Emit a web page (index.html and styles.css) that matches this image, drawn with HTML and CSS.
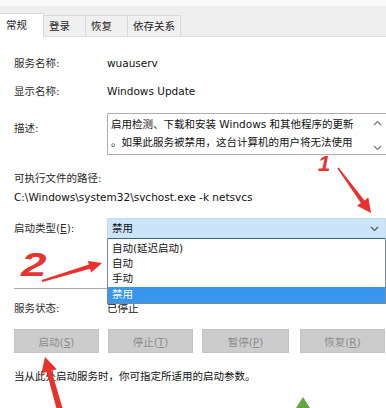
FILE: index.html
```html
<!DOCTYPE html>
<html>

<head>
    <meta charset="UTF-8">
    <title>Windows Update 的属性</title>
    <link rel="stylesheet" href="styles.css">
</head>

<body>
    <div class="tabbar">
        <div class="tab active">常规</div>
        <div class="tab">登录</div>
        <div class="tab">恢复</div>
        <div class="tab wide">依存关系</div>
    </div>

    <div class="content">
        <div class="row first">
            <span class="label">服务名称:</span>
            <span class="value">wuauserv</span>
        </div>
        <div class="row">
            <span class="label">显示名称:</span>
            <span class="value">Windows Update</span>
        </div>
        <div class="row desc-row">
            <span class="label desc-label">描述:</span>
            <div class="desc-box">
                启用检测、下载和安装 Windows 和其他程序的更新<br>
                。如果此服务被禁用，这台计算机的用户将无法使用
                <svg class="scroll-up" width="9" height="6" viewBox="0 0 9 6"><polyline points="1,5 4.5,1.5 8,5" fill="none" stroke="#777" stroke-width="1.2"/></svg>
                <svg class="scroll-down" width="9" height="6" viewBox="0 0 9 6"><polyline points="1,1 4.5,4.5 8,1" fill="none" stroke="#777" stroke-width="1.2"/></svg>
            </div>
        </div>

        <div class="path-label">可执行文件的路径:</div>
        <div class="path">C:\Windows\system32\svchost.exe -k netsvcs</div>

        <div class="row combo-row">
            <span class="label">启动类型(<u>E</u>):</span>
            <div class="combo">
                <span>禁用</span>
                <svg class="chevron" width="9" height="6" viewBox="0 0 9 6"><polyline points="1,1 4.5,4.5 8,1" fill="none" stroke="#555" stroke-width="1.2"/></svg>
                <ul class="dropdown">
                    <li>自动(延迟启动)</li>
                    <li>自动</li>
                    <li>手动</li>
                    <li class="selected">禁用</li>
                </ul>
            </div>
        </div>

        <div class="divider"></div>

        <div class="row status-row">
            <span class="label">服务状态:</span>
            <span class="value">已停止</span>
        </div>

        <div class="buttons">
            <button>启动(<u>S</u>)</button>
            <button>停止(<u>T</u>)</button>
            <button class="pause">暂停(<u>P</u>)</button>
            <button class="resume">恢复(<u>R</u>)</button>
        </div>

        <div class="hint">当从此处启动服务时，你可指定所适用的启动参数。</div>
    </div>

    <!-- 红色标注 -->
    <span class="mark mark-1">1</span>
    <span class="mark mark-2">2</span>
    <svg class="annotations" width="386" height="408" viewBox="0 0 386 408">
        <polygon points="337.4,168.4 338.6,167.6 364.5,200.4 368.3,197.6 371,213 357.1,205.8 360.9,203.0" fill="#e8302c"/>
        <polygon points="41.7,280 88.9,264.6 87.8,261.0 102,263 91.2,272.5 90.1,268.8 42.3,282" fill="#e8302c"/>
        <polygon points="57.1,410.8 46.7,372.1 41.4,373.6 45,357 56.8,369.2 51.5,370.7 62.9,409.2" fill="#e8302c"/>
        <polygon points="303,397 296,408 310,408" fill="#5fa83a"/>
    </svg>
</body>

</html>
```

FILE: styles.css
```css
body {
    margin: 0;
    width: 386px;
    height: 408px;
    overflow: hidden;
    position: relative;
    background: #fff;
    color: #1e1e1e;
    font-family: "DejaVu Sans", "Noto Sans CJK SC", sans-serif;
    font-size: 10.5px;
}

.tabbar {
    height: 37px;
    display: flex;
    align-items: flex-end;
    background: linear-gradient(#fafafa 0, #fafafa 6px, #eeeeee 6px);
    border-bottom: 1px solid #dcdcdc;
    box-sizing: border-box;
}

.tab {
    width: 42px;
    height: 21px;
    box-sizing: border-box;
    padding-left: 5px;
    line-height: 20px;
    white-space: nowrap;
    background: #f0f0f0;
    border: 1px solid #d9d9d9;
    border-bottom: none;
    border-left: none;
    color: #222;
}

.tab.wide {
    width: 53px;
}

.tab.active {
    width: 44px;
    height: 24px;
    margin-bottom: -1px;
    background: #fff;
    padding-left: 6px;
    line-height: 22px;
}

.content {
    padding-left: 14px;
}

.row {
    display: flex;
    line-height: 18px;
    margin-top: 10px;
}

.row.first {
    margin-top: 17px;
}

.label {
    width: 93px;
    flex: none;
    color: #2a2a2a;
}

.value {
    color: #111;
}

.desc-row {
    margin-top: 13px;
}

.desc-label {
    padding-top: 6px;
}

.desc-box {
    position: relative;
    flex: 1;
    height: 42px;
    box-sizing: border-box;
    margin-right: -4px;
    padding: 1px 20px 0 3px;
    border: 1px solid #adadad;
    line-height: 18px;
    color: #111;
    white-space: nowrap;
    overflow: hidden;
}

.scroll-up {
    position: absolute;
    right: 7px;
    top: 6px;
}

.scroll-down {
    position: absolute;
    right: 7px;
    top: 31px;
}

.path-label {
    margin-top: 14px;
    line-height: 19px;
}

.path {
    line-height: 19px;
    color: #111;
}

.combo-row {
    margin-top: 11px;
    line-height: 21px;
}

.combo {
    position: relative;
    flex: 1;
    height: 22px;
    box-sizing: border-box;
    padding-left: 4px;
    background: #cce4f7;
    border: 1px solid #c6dcec;
    border-bottom: 2px solid #3d6683;
    line-height: 19px;
    color: #111;
}

.chevron {
    position: absolute;
    right: 6px;
    top: 7px;
}

.dropdown {
    position: absolute;
    left: -1px;
    right: -1px;
    top: 20px;
    margin: 0;
    padding: 2px 0 0;
    list-style: none;
    background: #fff;
    border: 1px solid #7a8a99;
    border-top: none;
    z-index: 2;
}

.dropdown li {
    height: 15px;
    line-height: 15px;
    padding-left: 4px;
    color: #111;
}

.dropdown li.selected {
    margin-top: 1px;
    height: 16px;
    background: #3896ec;
    color: #fff;
}

.divider {
    margin-top: 48px;
    height: 1px;
    background: #a8a8a8;
}

.status-row {
    margin-top: 10px;
}

.buttons {
    display: flex;
    gap: 9px;
    margin-top: 12px;
}

button {
    width: 85px;
    height: 24px;
    padding: 0;
    border: 1px solid #c4c4c4;
    background: #cccccc;
    color: #8c8c8c;
    font-family: inherit;
    font-size: 10.5px;
}

button.pause {
    width: 87px;
}

button.resume {
    margin-left: 2px;
}

.hint {
    margin-top: 14px;
    line-height: 18px;
    color: #111;
}

.mark {
    position: absolute;
    color: #e53530;
    font-family: "Liberation Sans", sans-serif;
    font-weight: bold;
    font-style: italic;
    z-index: 3;
}

.mark-1 {
    left: 318px;
    top: 151px;
    font-size: 22px;
}

.mark-2 {
    left: 21px;
    top: 247px;
    font-size: 34px;
    line-height: 34px;
    transform: scaleX(1.35);
    transform-origin: left center;
}

.annotations {
    position: absolute;
    left: 0;
    top: 0;
    pointer-events: none;
    z-index: 3;
}
```
